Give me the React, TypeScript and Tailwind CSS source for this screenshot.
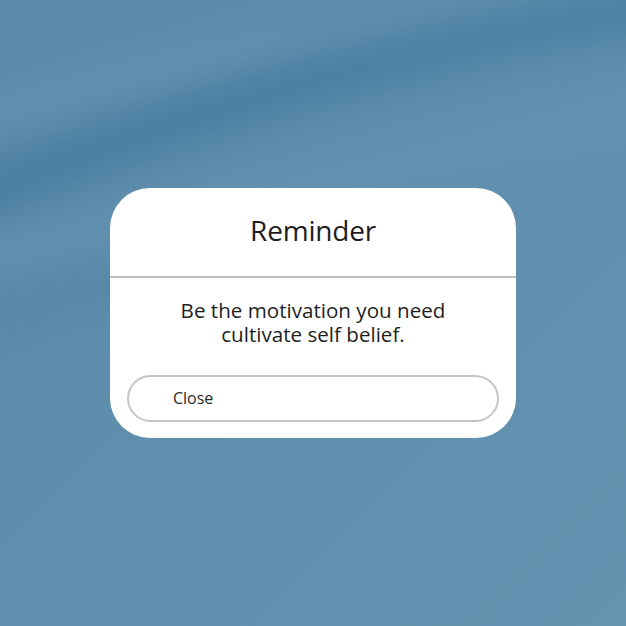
import React from "react";

export default function App() {
  return (
    <div className="relative w-[626px] h-[626px] overflow-hidden bg-[#6090ae]" style={{ fontFamily: '"Open Sans", "Noto Sans", sans-serif' }}>
      <svg className="absolute inset-0" width="626" height="626" viewBox="0 0 626 626">
        <defs>
          <filter id="b1" x="-50%" y="-50%" width="200%" height="200%">
            <feGaussianBlur stdDeviation="20" />
          </filter>
          <linearGradient id="bg" x1="0" y1="0" x2="1" y2="1">
            <stop offset="0" stopColor="#5b8aa8" />
            <stop offset="0.5" stopColor="#5f8fad" />
            <stop offset="1" stopColor="#6593b0" />
          </linearGradient>
        </defs>
        <rect width="626" height="626" fill="url(#bg)" />
        <path d="M-60 130 C 80 90, 250 50, 420 30 S 640 0, 700 -10" stroke="#6896b3" strokeWidth="40" fill="none" filter="url(#b1)" opacity="0.6" />
        <path d="M-60 210 C 60 160, 200 110, 330 75 S 560 20, 700 0" stroke="#43779b" strokeWidth="36" fill="none" filter="url(#b1)" opacity="0.95" />
        <path d="M-60 275 C 80 235, 250 195, 420 160 S 640 110, 700 100" stroke="#6a98b4" strokeWidth="30" fill="none" filter="url(#b1)" opacity="0.55" />
        <path d="M-60 330 C 40 300, 120 280, 200 265" stroke="#4e80a2" strokeWidth="30" fill="none" filter="url(#b1)" opacity="0.6" />
      </svg>
      <div className="relative flex h-full items-center justify-center">
        <div className="flex w-[406px] flex-col rounded-[40px] bg-white">
          <div className="flex h-[88px] items-center justify-center pb-[5px]">
            <span className="text-[28px] leading-none text-[#1e1e1e] tracking-[-0.2px]">Reminder</span>
          </div>
          <div className="h-[1.5px] bg-[#bdbdbd]" />
          <div className="flex flex-col items-center pt-[20px] text-[20.6px] leading-[24.5px] text-[#1e1e1e]">
            <span>Be the motivation you need</span>
            <span>cultivate self belief.</span>
          </div>
          <div className="px-[17px] pt-[28px] pb-[16px]">
            <div className="flex h-[47px] items-center rounded-full border-2 border-[#c4c4c4] pl-[44px] text-[16px] text-[#2a2a2a]">
              Close
            </div>
          </div>
        </div>
      </div>
    </div>
  );
}
